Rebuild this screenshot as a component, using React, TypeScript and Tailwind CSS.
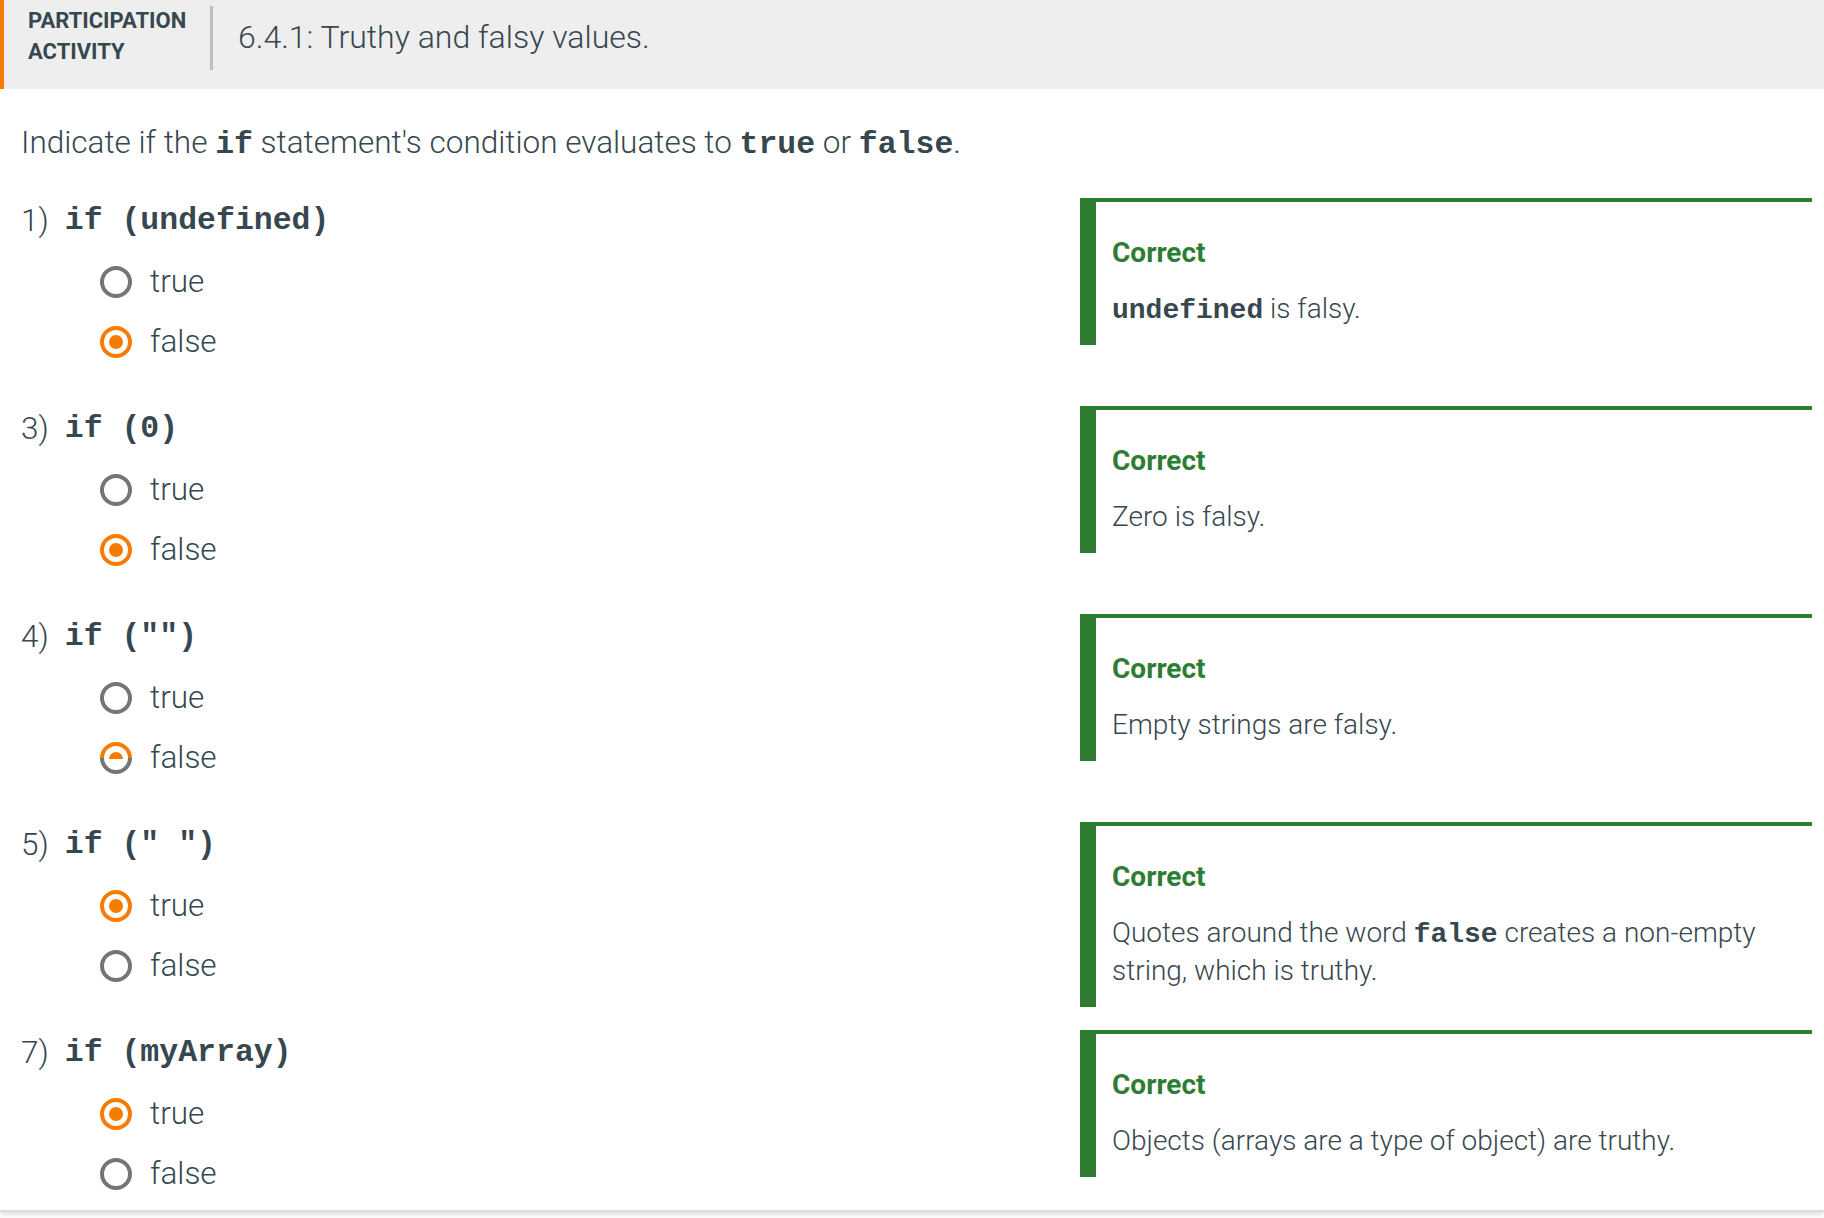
import React from 'react';

const ORANGE = '#f57c00';
const GRAY = '#757575';

type RadioState = 'off' | 'on' | 'half';

function RadioMark({ state }: { state: RadioState }) {
  if (state === 'half') {
    // caught mid-transition: top half already orange, bottom still gray
    return (
      <svg width="32" height="32" viewBox="0 0 32 32" className="shrink-0">
        <path d="M2 16 A14 14 0 0 1 30 16" fill="none" stroke={ORANGE} strokeWidth="4" />
        <path d="M30 16 A14 14 0 0 1 2 16" fill="none" stroke={GRAY} strokeWidth="4" />
        <path d="M9 17 A7 7 0 0 1 23 17 Z" fill={ORANGE} />
      </svg>
    );
  }
  return (
    <svg width="32" height="32" viewBox="0 0 32 32" className="shrink-0">
      <circle cx="16" cy="16" r="14" fill="none" stroke={state === 'on' ? ORANGE : GRAY} strokeWidth="4" />
      {state === 'on' && <circle cx="16" cy="16" r="7" fill={ORANGE} />}
    </svg>
  );
}

function Code({ children, className = '' }: { children: React.ReactNode; className?: string }) {
  return <code className={`font-['Liberation_Mono',monospace] font-bold leading-none ${className}`}>{children}</code>;
}

interface Question {
  num: string;
  code: string;
  answer: 'true' | 'false';
  half?: boolean;
  explanation: React.ReactNode;
}

const questions: Question[] = [
  {
    num: '1)',
    code: 'if (undefined)',
    answer: 'false',
    explanation: (
      <>
        <Code className="text-[28px]">undefined</Code> is falsy.
      </>
    ),
  },
  { num: '3)', code: 'if (0)', answer: 'false', explanation: 'Zero is falsy.' },
  { num: '4)', code: 'if ("")', answer: 'false', half: true, explanation: 'Empty strings are falsy.' },
  {
    num: '5)',
    code: 'if (" ")',
    answer: 'true',
    explanation: (
      <>
        Quotes around the word <Code className="text-[28px]">false</Code> creates a non-empty string, which is truthy.
      </>
    ),
  },
  { num: '7)', code: 'if (myArray)', answer: 'true', explanation: 'Objects (arrays are a type of object) are truthy.' },
];

function QuestionRow({ q, last }: { q: Question; last: boolean }) {
  return (
    <div className="flex items-start">
      <div className={`w-[1059px] shrink-0 ${last ? 'pb-[6px]' : 'pb-[36px]'}`}>
        <div className="flex h-[42px] items-center whitespace-pre">
          <span className="text-[31.5px] font-light">{q.num}</span>
          <Code className="ml-[16px] text-[31.5px]">{q.code}</Code>
        </div>
        <div className="mt-[10px] ml-[79px]">
          {(['true', 'false'] as const).map((opt) => (
            <label key={opt} className="flex h-[60px] items-center gap-[18px] text-[31.5px] font-light">
              <RadioMark state={q.answer === opt ? (q.half ? 'half' : 'on') : 'off'} />
              {opt}
            </label>
          ))}
        </div>
      </div>
      <div className="-mt-[2px] flex-1 border-t-4 border-l-[16px] border-[#2e7d32] pt-[33px] pb-[17px] pl-[16px] pr-[40px]">
        <div className="text-[28px] leading-[36px] font-bold text-[#2e7d32]">Correct</div>
        <p className="mt-[19px] text-[28px] leading-[38px] font-light">{q.explanation}</p>
      </div>
    </div>
  );
}

export default function App() {
  return (
    <div className="min-h-screen bg-white font-['Roboto',sans-serif] text-[#37474f]">
      <div className="border-b-2 border-[#dcdcdc] shadow-[0_3px_4px_rgba(0,0,0,0.12)]">
        {/* Activity header */}
        <div className="flex h-[89px] items-start border-l-4 border-[#f57c00] bg-[#eeeeee]">
          <div className="w-[206px] pt-[5px] pl-[24px] text-[22px] leading-[31px] font-bold">
            PARTICIPATION
            <br />
            ACTIVITY
          </div>
          <div className="mt-[6px] h-[64px] w-[3px] bg-[#bdbdbd]" />
          <h1 className="mt-[16px] ml-[25px] text-[32px] leading-[42px] font-light">6.4.1: Truthy and falsy values.</h1>
        </div>

        <div className="pl-[21px] pr-[12px]">
          <p className="mt-[34px] mb-[37px] text-[31.5px] leading-[40px] font-light">
            Indicate if the <Code className="text-[31.5px]">if</Code> statement's condition evaluates to{' '}
            <Code className="text-[31.5px]">true</Code> or <Code className="text-[31.5px]">false</Code>.
          </p>

          {questions.map((q, i) => (
            <QuestionRow key={q.num} q={q} last={i === questions.length - 1} />
          ))}
        </div>
      </div>
    </div>
  );
}
